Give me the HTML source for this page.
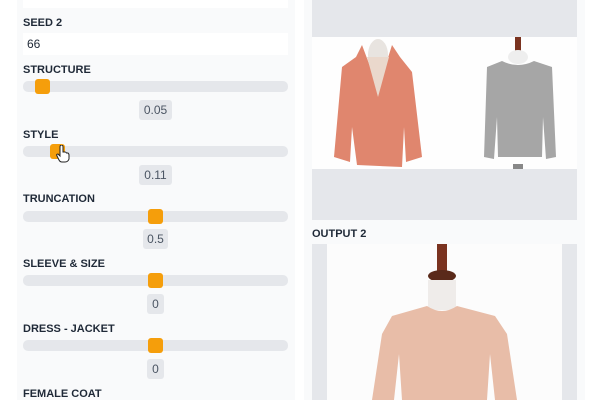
<!DOCTYPE html>
<html><head><style>
body{margin:0;width:600px;height:400px;overflow:hidden;background:#fff;font-family:"Liberation Sans",sans-serif;position:relative}
div{position:absolute;box-sizing:border-box}
.lbl{font-size:11px;font-weight:bold;color:#1f2937;left:23px;line-height:12px}
.trk{left:23px;width:265px;height:11px;background:#e5e7eb;border-radius:5px}
.th{width:15px;height:15px;background:#f59e0b;border-radius:3px}
.val{background:#e5e7eb;border-radius:3px;font-size:12px;color:#4b5563;text-align:center;line-height:20px;height:20px}
</style></head><body>
<div style="left:17px;top:0;width:278px;height:400px;background:#f9fafb"></div>
<div style="left:23px;top:0;width:265px;height:8px;background:#fff"></div>
<div class="lbl" style="top:17px">SEED 2</div>
<div style="left:23px;top:33px;width:265px;height:22px;background:#fff;font-size:12px;color:#1f2937;padding-left:4px;line-height:22px">66</div>

<div class="lbl" style="top:64px">STRUCTURE</div>
<div class="trk" style="top:81px"></div><div class="th" style="left:35px;top:79px"></div>
<div class="val" style="left:139px;top:100px;width:33px">0.05</div>

<div class="lbl" style="top:129px">STYLE</div>
<div class="trk" style="top:146px"></div><div class="th" style="left:50px;top:144px"></div>
<svg style="position:absolute;left:56px;top:145px" width="14" height="18" viewBox="0 0 14 18"><path d="M4 2 Q4 0 5.5 0 Q7 0 7 2 L7 7 L9 7 Q10 7 10.5 8 L12 8 Q13 9 13 10 L13 14 Q12 17 9 17 L6 17 Q4 17 3 15 L1 11 Q0 9 2 9 L4 11 Z" fill="#fff" stroke="#222" stroke-width="1"/></svg>
<div class="val" style="left:139px;top:165px;width:33px">0.11</div>

<div class="lbl" style="top:193px">TRUNCATION</div>
<div class="trk" style="top:211px"></div><div class="th" style="left:148px;top:209px"></div>
<div class="val" style="left:143px;top:229px;width:25px">0.5</div>

<div class="lbl" style="top:258px">SLEEVE &amp; SIZE</div>
<div class="trk" style="top:275px"></div><div class="th" style="left:148px;top:273px"></div>
<div class="val" style="left:147px;top:294px;width:17px">0</div>

<div class="lbl" style="top:323px">DRESS - JACKET</div>
<div class="trk" style="top:340px"></div><div class="th" style="left:148px;top:338px"></div>
<div class="val" style="left:147px;top:359px;width:17px">0</div>

<div class="lbl" style="top:388px">FEMALE COAT</div>

<div style="left:304px;top:0;width:281px;height:400px;background:#f9fafb"></div>
<div style="left:312px;top:0;width:265px;height:220px;background:#e5e7eb"></div>
<div style="left:312px;top:37px;width:265px;height:132px;background:#fefefe">
<svg width="265" height="132" viewBox="0 0 265 132">
<ellipse cx="66" cy="18" rx="10" ry="16" fill="#e8e4e0"/>
<path d="M50 8 L44 20 L30 30 L22 120 L38 125 L40 90 L45 128 L90 130 L92 90 L94 125 L110 120 L100 35 L88 20 L80 8 L70 40 L62 40 Z" fill="#e0866e"/>
<path d="M55 20 L66 60 L77 20" fill="#ead8cc"/>
<rect x="203" y="0" width="6" height="15" fill="#7a3320"/>
<ellipse cx="206" cy="20" rx="10" ry="7" fill="#eee"/>
<path d="M190 24 L175 30 L172 120 L182 122 L185 80 L186 120 L230 120 L231 80 L234 122 L244 120 L240 30 L222 24 Q206 32 190 24 Z" fill="#a6a6a6"/>
<rect x="201" y="127" width="10" height="5" fill="#888"/>
</svg></div>
<div style="left:312px;top:228px;font-size:11px;font-weight:bold;color:#1f2937;line-height:12px">OUTPUT 2</div>
<div style="left:312px;top:244px;width:265px;height:156px;background:#e5e7eb"></div>
<div style="left:327px;top:244px;width:235px;height:156px;background:#fcfcfc">
<svg width="235" height="156" viewBox="0 0 235 156">
<rect x="110" y="0" width="10" height="30" fill="#7a3320"/>
<ellipse cx="115" cy="32" rx="14" ry="6" fill="#5a2a1a"/>
<path d="M101 36 L101 66 L129 66 L129 36 Z" fill="#efecea"/>
<path d="M100 62 L65 72 L55 90 L45 156 L67 156 L72 110 L75 156 L160 156 L163 110 L168 156 L190 156 L180 90 L168 72 L130 62 Q115 72 100 62 Z" fill="#e8bda8"/>
</svg></div>
</body></html>
